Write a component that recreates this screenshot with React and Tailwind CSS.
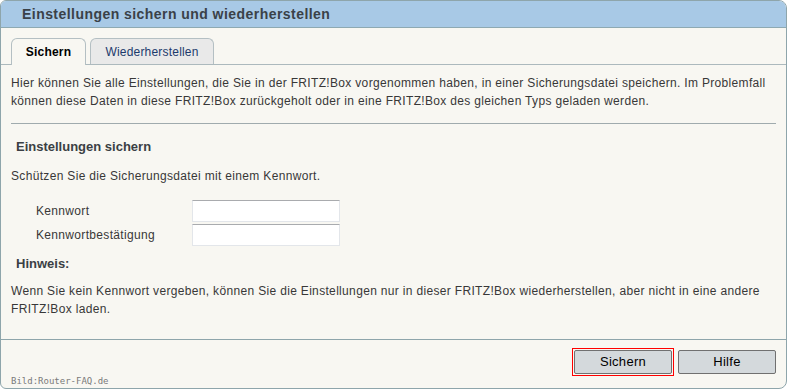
import React from 'react';

export default function App() {
  return (
    <div className="w-[788px] h-[389px] bg-white font-['Liberation_Sans',Arial,sans-serif]">
      <div className="relative w-[787px] h-[389px] flex flex-col bg-[#f8f7f2] border border-[#8ea5ab] rounded-tl-[6px] rounded-tr-[8px] rounded-bl-[6px] rounded-br-[8px] overflow-hidden">
        {/* Titel */}
        <div className="h-[27px] shrink-0 flex items-center pl-[21px] bg-[#a8c9e6] border-b border-[#8ea9b2]">
          <h1 className="text-[14px] font-bold text-[#3a4148] tracking-[0.45px]">Einstellungen sichern und wiederherstellen</h1>
        </div>

        {/* Reiter */}
        <div className="flex items-end gap-[4px] pt-[10px] px-[10px] border-b border-[#acb9bd]">
          <div className="-mb-px w-[75px] h-[27px] flex items-center justify-center bg-[#f8f7f2] border border-b-0 border-[#b4bfc3] rounded-t-[6px] text-[12px] font-bold text-black tracking-[0.2px]">
            Sichern
          </div>
          <div className="w-[124px] h-[26px] flex items-center justify-center bg-[#e9e9e9] border border-b-0 border-[#b4bfc3] rounded-t-[6px] text-[12px] text-[#1c3a6c] tracking-[0.2px]">
            Wiederherstellen
          </div>
        </div>

        {/* Inhalt */}
        <div className="flex-1 pl-[10px] pr-[10px] text-[12px] text-[#383838] tracking-[0.33px]">
          <p className="mt-[9px] leading-[18px]">
            Hier können Sie alle Einstellungen, die Sie in der FRITZ!Box vorgenommen haben, in einer Sicherungsdatei speichern. Im Problemfall können diese Daten in diese FRITZ!Box zurückgeholt oder in eine FRITZ!Box des gleichen Typs geladen werden.
          </p>
          <hr className="mt-[13px] border-t border-[#a0abae]" />

          <h2 className="mt-[14px] pl-[5px] leading-[18px] text-[13px] font-bold text-[#3b3f44] tracking-normal">Einstellungen sichern</h2>
          <p className="mt-[11px] leading-[18px]">Schützen Sie die Sicherungsdatei mit einem Kennwort.</p>

          <div className="mt-[15px] flex flex-col gap-[2px]">
            <div className="flex items-center h-[22px]">
              <label className="w-[181px] pl-[25px]">Kennwort</label>
              <input type="password" className="w-[148px] h-[22px] bg-white border border-[#e3e6ea] border-t-[#a9abae]" />
            </div>
            <div className="flex items-center h-[22px]">
              <label className="w-[181px] pl-[25px]">Kennwortbestätigung</label>
              <input type="password" className="w-[148px] h-[22px] bg-white border border-[#e3e6ea] border-t-[#a9abae]" />
            </div>
          </div>

          <h2 className="mt-[9px] pl-[5px] leading-[18px] text-[13px] font-bold text-[#3b3f44] tracking-normal">Hinweis:</h2>
          <p className="mt-[9px] leading-[18px]">
            Wenn Sie kein Kennwort vergeben, können Sie die Einstellungen nur in dieser FRITZ!Box wiederherstellen, aber nicht in eine andere FRITZ!Box laden.
          </p>
        </div>

        {/* Schaltflächen */}
        <div className="h-[49px] shrink-0 border-t border-[#8ea5ab] flex justify-end items-start gap-[4px] pt-[8px] pr-[10px]">
          <div className="p-px border border-[#ff0000]">
            <button className="block w-[98px] h-[24px] bg-[#d4d9dc] border border-[#707070] rounded-[2px] text-[13px] text-black tracking-[0.3px]">
              Sichern
            </button>
          </div>
          <button className="mt-[2px] w-[98px] h-[24px] bg-[#d4d9dc] border border-[#707070] rounded-[2px] text-[13px] text-black tracking-[0.3px]">
            Hilfe
          </button>
        </div>

        <span className="absolute left-[10px] bottom-[1px] text-[9px] leading-[12px] text-[#7a7a7a] font-['DejaVu_Sans_Mono',monospace]">Bild:Router-FAQ.de</span>
      </div>
    </div>
  );
}
